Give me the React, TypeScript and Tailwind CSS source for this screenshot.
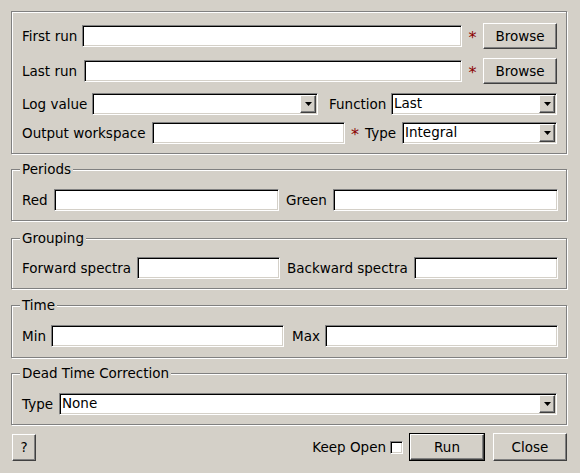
import type { ReactNode } from 'react';

const sunken =
  'bg-white border border-t-[#808080] border-l-[#808080] border-b-white border-r-white shadow-[inset_1px_1px_0_#000,inset_-1px_-1px_0_#d4d0c8]';
const raised =
  'bg-[#d4d0c8] border border-t-white border-l-white border-b-[#404040] border-r-[#404040] shadow-[inset_-1px_-1px_0_#808080]';

const Input = ({ className = '' }: { className?: string }) => (
  <div className={`h-[22px] ${sunken} ${className}`} />
);

const Combo = ({ value = '', className = '' }: { value?: string; className?: string }) => (
  <div className={`h-[22px] flex items-stretch ${sunken} ${className}`}>
    <div className="flex-1 flex items-center pl-[2px] leading-none">{value}</div>
    <div className={`w-[16px] flex items-center justify-center m-[1px] ${raised}`}>
      <svg width="7" height="4" viewBox="0 0 7 4">
        <polygon points="0,0 7,0 3.5,4" fill="#000" />
      </svg>
    </div>
  </div>
);

const Star = ({ className = '' }: { className?: string }) => (
  <div className={`text-center text-[#8b0000] text-[16px] leading-none pt-[3px] ${className}`}>*</div>
);

const Button = ({ label, className = '' }: { label: string; className?: string }) => (
  <div className={`flex items-center justify-center ${raised} ${className}`}>{label}</div>
);

const Group = ({
  title,
  className = '',
  children,
}: {
  title?: string;
  className?: string;
  children: ReactNode;
}) => (
  <div
    className={`relative border border-[#808080] shadow-[1px_1px_0_#fff,inset_1px_1px_0_#fff] pl-[10px] pr-[8px] ${className}`}
  >
    {title && (
      <div className="absolute left-[8px] top-[-9px] px-[2px] bg-[#d4d0c8] leading-[16px]">{title}</div>
    )}
    {children}
  </div>
);

export default function App() {
  return (
    <div className="w-[580px] h-[473px] bg-[#d4d0c8] pl-[11px] pr-[13px] pt-[11px] font-['DejaVu_Sans',sans-serif] text-[13.5px] text-black">
      <Group className="h-[143px] pt-[11px] !pr-[9px]">
        <div className="h-[26px] flex items-center">
          <span className="w-[60px]">First run</span>
          <Input className="flex-1" />
          <Star className="w-[21px]" />
          <Button label="Browse" className="w-[74px] h-[26px]" />
        </div>
        <div className="mt-[9px] h-[26px] flex items-center">
          <span className="w-[62px]">Last run</span>
          <Input className="flex-1" />
          <Star className="w-[21px]" />
          <Button label="Browse" className="w-[74px] h-[26px]" />
        </div>
        <div className="mt-[9px] h-[22px] flex items-center">
          <span className="w-[70px]">Log value</span>
          <Combo className="w-[226px]" />
          <span className="w-[73px] pl-[11px]">Function</span>
          <Combo className="flex-1" value="Last" />
        </div>
        <div className="mt-[7px] h-[22px] flex items-center">
          <span className="w-[130px]">Output workspace</span>
          <Input className="w-[193px]" />
          <Star className="w-[20px]" />
          <span className="w-[37px]">Type</span>
          <Combo className="flex-1" value="Integral" />
        </div>
      </Group>

      <Group title="Periods" className="mt-[15px] h-[52px] pt-[19px]">
        <div className="h-[22px] flex items-center">
          <span className="w-[32px]">Red</span>
          <Input className="w-[225px]" />
          <span className="w-[54px] pl-[7px]">Green</span>
          <Input className="flex-1" />
        </div>
      </Group>

      <Group title="Grouping" className="mt-[17px] h-[51px] pt-[18px]">
        <div className="h-[22px] flex items-center">
          <span className="w-[115px]">Forward spectra</span>
          <Input className="w-[143px]" />
          <span className="w-[134px] pl-[7px]">Backward spectra</span>
          <Input className="flex-1" />
        </div>
      </Group>

      <Group title="Time" className="mt-[16px] h-[53px] pt-[19px]">
        <div className="h-[22px] flex items-center">
          <span className="w-[29px]">Min</span>
          <Input className="w-[233px]" />
          <span className="w-[41px] pl-[8px]">Max</span>
          <Input className="flex-1" />
        </div>
      </Group>

      <Group title="Dead Time Correction" className="mt-[15px] h-[52px] pt-[19px]">
        <div className="h-[22px] flex items-center">
          <span className="w-[37px]">Type</span>
          <Combo className="flex-1 mr-[1px]" value="None" />
        </div>
      </Group>

      <div className="mt-[8px] h-[28px] flex items-center">
        <Button label="?" className="ml-[1px] w-[24px] h-[27px]" />
        <div className="flex-1" />
        <span>Keep Open</span>
        <div className={`ml-[4px] w-[13px] h-[13px] ${sunken}`} />
        <div className="ml-[6px] w-[76px] h-[28px] border border-black">
          <Button label="Run" className="w-full h-full" />
        </div>
        <Button label="Close" className="ml-[8px] w-[74px] h-[28px]" />
      </div>
    </div>
  );
}
